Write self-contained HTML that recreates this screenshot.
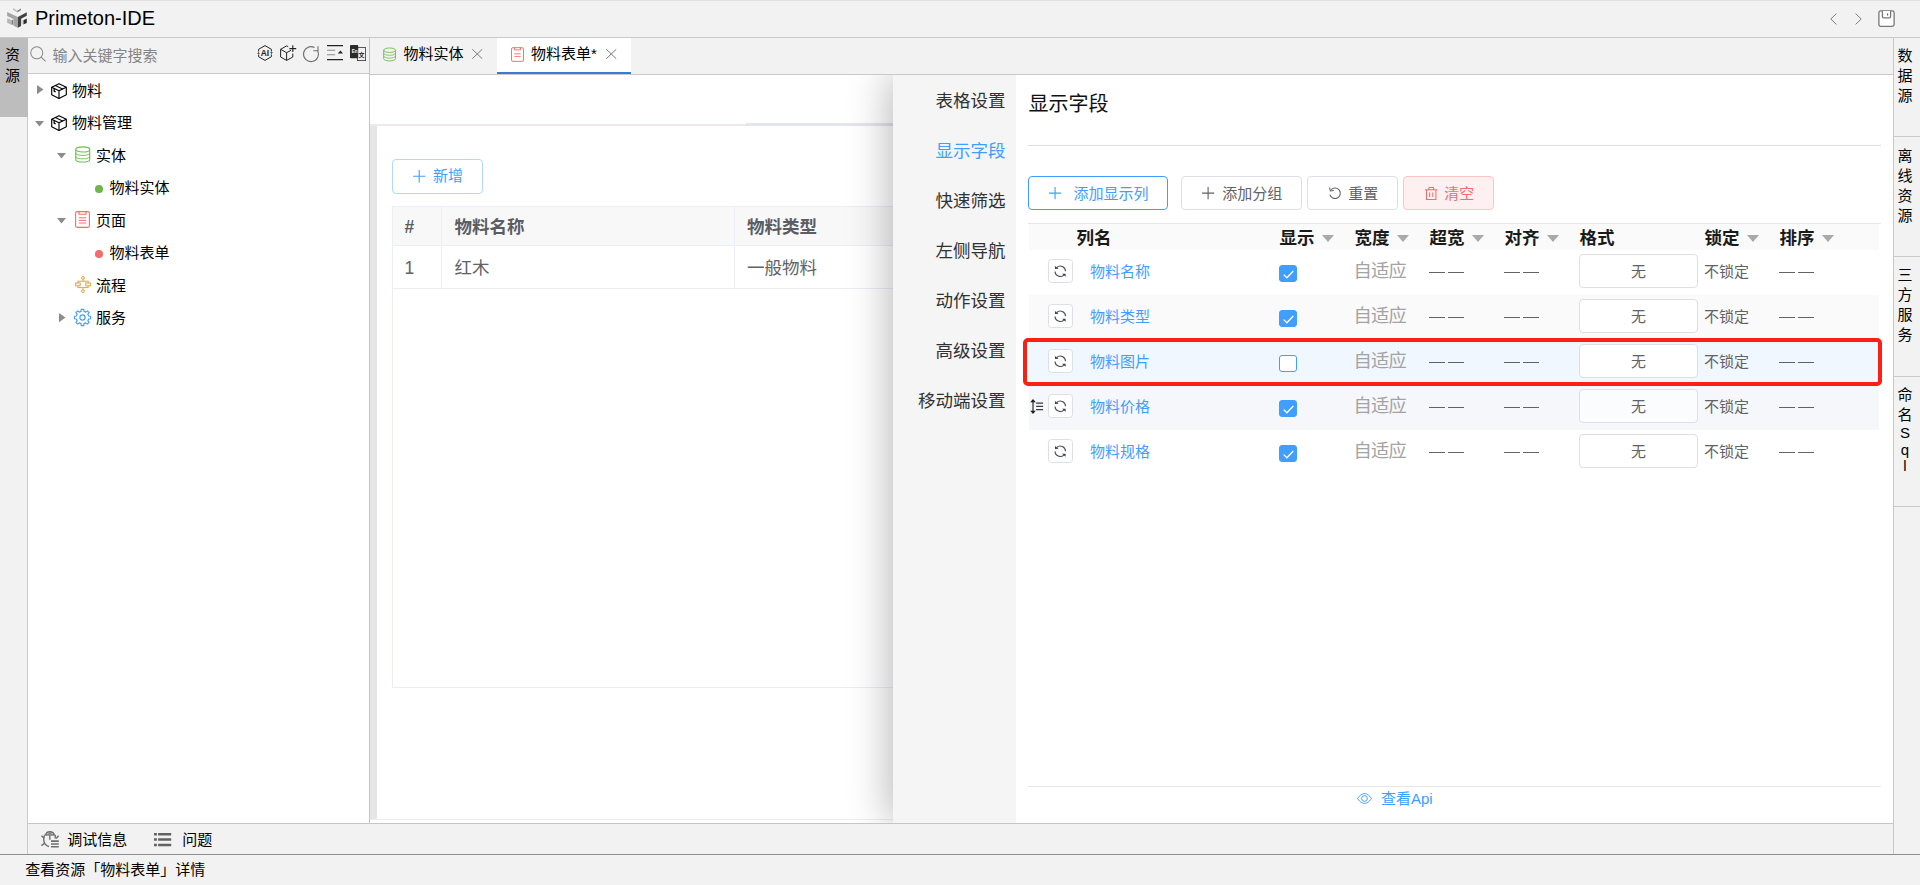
<!DOCTYPE html>
<html lang="zh-CN">
<head>
<meta charset="utf-8">
<title>Primeton-IDE</title>
<style>
*{box-sizing:border-box;margin:0;padding:0}
html,body{width:1920px;height:885px;overflow:hidden;background:#f2f2f2}
body{font-family:"Liberation Sans","Noto Sans CJK SC",sans-serif;font-size:15px;color:#000;position:relative}
.abs{position:absolute}
.t{position:absolute;white-space:nowrap;line-height:20px;height:20px}
svg{position:absolute;overflow:visible}
#titlebar{left:0;top:0;width:1920px;height:38px;background:#f2f2f2;border-bottom:1px solid #c9c9c9;box-shadow:inset 0 1px 0 #e2e2e4}
#lstrip{left:0;top:38px;width:28px;height:816px;background:#f2f2f2;border-right:1px solid #cacaca}
#lstrip .tab{left:0;top:0;width:27.5px;height:78.5px;background:#bdbdbd}
#lpanel{left:28px;top:38px;width:341px;height:785px;background:#fff}
#search{left:0;top:0;width:341px;height:36px;background:#f2f2f2;border-bottom:1px solid #c9c9c9}
#tabbar{left:369px;top:38px;width:1524px;height:37px;background:#f2f2f2;border-left:1px solid #c4c4c4;border-bottom:1px solid #c9c9c9}
#tabbar .on{left:127px;top:0;width:134px;height:36px;background:#fff;border-bottom:2px solid #3a7bd0}
#main{left:369px;top:75px;width:1524px;height:748px;background:#fff;overflow:hidden;border-left:1px solid #c4c4c4}
#drawer{left:523px;top:0;width:1000px;height:748px;background:#fff;box-shadow:-2px 0 40px rgba(0,0,0,.30)}
#dnav{left:0;top:0;width:123px;height:748px;background:#f5f5f5}
#dnav .t{font-size:17.5px;color:#303133;left:42.5px;line-height:24px;height:24px}
#rstrip{left:1893px;top:38px;width:27px;height:816px;background:#f2f2f2;border-left:1px solid #c8c8c8}
#rstrip .t{left:3px;width:16px;text-align:center;font-size:15px}
#rstrip .sep{left:0;width:26px;height:1px;background:#cacaca}
#bbar{left:28px;top:823px;width:1865px;height:31px;background:#f2f2f2;border-top:1px solid #c6c6c6}
#status{left:0;top:854px;width:1920px;height:31px;background:#f2f2f2;border-top:1px solid #8f8f8f}
.tree .t{font-size:15px;color:#000}
.btn{position:absolute;height:34px;border:1px solid #dcdfe6;border-radius:4px;background:#fff}
.hd{font-weight:700;font-size:17.5px;color:#1a1a1a;line-height:24px;height:24px}
.tri{position:absolute;width:0;height:0;border-left:6px solid transparent;border-right:6px solid transparent;border-top:7px solid #a9a9a9}
.row{position:absolute;left:136px;width:850px;height:45px}
.sbtn{position:absolute;left:19px;top:9px;width:25px;height:24px;border:1px solid #dcdfe6;border-radius:3.5px;background:#fff}
.nm{font-size:15px;color:#409eff;left:61px;top:11.5px}
.cb{position:absolute;left:250px;top:15px;width:18px;height:17px;border-radius:3px;background:#409eff;border:1px solid #409eff}
.cb.off{background:#fff;border-color:#409eff}
.ad{font-size:18.3px;letter-spacing:-.8px;color:#a3a3a3;top:10px;line-height:22px;height:22px}
.ds{position:absolute;top:22px;height:1px;background:#606266;width:15.5px}
.inp{position:absolute;left:550px;top:4px;width:119px;height:34px;border:1px solid #dcdfe6;border-radius:4px;background:#fff}
.inp .t{left:0;width:117px;text-align:center;top:6.5px;color:#606266;font-size:15px}
.lk{font-size:15px;color:#606266;left:675px;top:11.5px}
</style>
</head>
<body>
<div id="titlebar" class="abs">
<svg style="left:4px;top:4px" width="28" height="28" viewBox="0 0 885 885"><polygon points="100,250 440,410 440,750 300,685 300,475 100,380" fill="#a4a4a4"/><polygon points="440,410 720,260 720,370 540,465 540,695 440,750" fill="#414141"/><polygon points="285,125 420,210 420,268 285,182" fill="#bcbcbc"/><polygon points="420,210 535,145 535,200 420,268" fill="#7e7e7e"/><polygon points="100,440 250,510 250,660 100,590" fill="#b6b6b6"/><polygon points="250,510 290,490 290,640 250,660" fill="#7a7a7a"/><polygon points="100,440 140,420 290,490 250,510" fill="#e8e8e8"/><polygon points="610,510 720,460 720,600 610,650" fill="#2c2c2c"/><polygon points="550,485 610,510 610,650 550,625" fill="#d2d2d2"/></svg>
<div class="t" style="left:35px;top:5.5px;font-size:20px;line-height:24px;height:24px">Primeton-IDE</div>

<svg style="left:1829.6px;top:12.6px" width="7" height="12" viewBox="0 0 7 12" fill="none" stroke="#7d7d7d" stroke-width="1"><path d="M6.4 0.6L0.8 6L6.4 11.4"/></svg>
<svg style="left:1855.4px;top:12.6px" width="7" height="12" viewBox="0 0 7 12" fill="none" stroke="#7d7d7d" stroke-width="1"><path d="M0.6 0.6L6.2 6L0.6 11.4"/></svg>
<svg style="left:1878px;top:10px" width="17" height="17" viewBox="0 0 17 17" fill="none" stroke="#777" stroke-width="1.3"><rect x="0.9" y="0.9" width="15.2" height="15.4" rx="1.8" fill="#fff"/><path d="M4.4 0.9V6.4Q4.4 7.8 5.8 7.8H11.2Q12.6 7.8 12.6 6.4V0.9" fill="#fff"/><path d="M9.6 3.4V5.6" stroke="#555" stroke-width="1.1"/></svg>

</div>
<div id="lstrip" class="abs"><div class="tab abs"></div>
<div class="t" style="left:5px;top:7.399999999999999px;width:15px">资</div>
<div class="t" style="left:5px;top:27.5px;width:15px">源</div>
</div>
<div id="lpanel" class="abs">
<div id="search" class="abs">
<svg style="left:1.7px;top:7.8px" width="16" height="16" viewBox="0 0 17 17" fill="none" stroke="#8a8a8a" stroke-width="1.1"><circle cx="7.2" cy="7.2" r="6.4"/><path d="M11.8 11.8L16.6 16.4"/></svg>
<div class="t" style="left:24.5px;top:7.5px;color:#848484">输入关键字搜索</div>
<svg style="left:229px;top:7px" width="16" height="16" viewBox="0 0 16 16" fill="none" stroke="#222" stroke-width="1"><path d="M8 0.6L14.4 4.3V11.7L8 15.4L1.6 11.7V4.3Z" stroke-dasharray="none"/><path d="M14.4 6.6V9.6M1.6 6.6V9.6" stroke="#f2f2f2" stroke-width="2"/><path d="M13.2 7.2L14.5 9L15.8 7.2ZM0.2 8.8L1.5 7L2.8 8.8Z" fill="#222" stroke="none"/><text x="8" y="11" font-family="Liberation Sans,sans-serif" font-size="8.4" font-weight="700" text-anchor="middle" fill="#222" stroke="none">AI</text></svg>
<svg style="left:252px;top:7px" width="16" height="16" viewBox="0 0 16 16" fill="none" stroke="#222" stroke-width="1"><path d="M8.2 1.6L6.6 0.9L0.6 4.3V12L6.6 15.4L12.8 12V8.6"/><path d="M0.6 4.3L6.6 7.7L11 5.3M6.6 7.7V15.4"/><path d="M12.8 0.2V7M9.4 3.6H16.2" stroke-width="1.1"/></svg>
<svg style="left:274.8px;top:8px" width="16" height="16" viewBox="0 0 16 16" fill="none" stroke="#707070" stroke-width="1.1"><path d="M14.7 4.74A7.5 7.5 0 1 1 11.5 1.5"/><path d="M15 0.3V4.7H10.3"/></svg>
<svg style="left:299px;top:7px" width="16" height="16" viewBox="0 0 16 16" fill="none"><path d="M0 0.6H16M0 14.6H16" stroke="#222" stroke-width="1.1"/><path d="M0 5.2H8.2M0 9.8H8.2" stroke="#8a8a8a" stroke-width="1.1"/><path d="M10.8 8.6L13.4 5.6L16 8.6Z" fill="#222"/></svg>
<svg style="left:322px;top:7.3px" width="16" height="16" viewBox="0 0 16 16"><rect x="7.4" y="2.6" width="8.2" height="13" fill="#f2f2f2" stroke="#333" stroke-width=".8"/><rect x="0" y="0" width="8.2" height="13.2" rx=".8" fill="#2b2b2b"/><text x="4.6" y="8.2" font-family="Liberation Sans,sans-serif" font-size="4.6" font-weight="700" text-anchor="middle" fill="#fff">En</text><text x="11.4" y="11.6" font-family="Noto Sans CJK SC,sans-serif" font-size="6" font-weight="700" text-anchor="middle" fill="#222">文</text></svg>
</div>
<div class="tree"><svg style="left:8.8px;top:47.1px" width="6.5" height="9.2" viewBox="0 0 6.5 9.2"><path d="M0 0L6.5 4.6L0 9.2Z" fill="#8c8c8c"/></svg><svg style="left:23px;top:45px" width="16" height="16" viewBox="0 0 16 16" fill="none" stroke="#000" stroke-width="1.15" stroke-linejoin="round"><path d="M8 0.7L15.3 4.2V11.8L8 15.4L0.7 11.8V4.2Z"/><path d="M0.7 4.2L8 7.8L15.3 4.2M8 7.8V15.4"/><path d="M4.3 2.5L11.6 6"/><path d="M3.2 5.6V8.2L4.6 8.9" stroke-width="1.3"/></svg><div class="t" style="left:44px;top:42.75px;">物料</div><svg style="left:7.0px;top:82.89999999999999px" width="9" height="5.4" viewBox="0 0 9 5.4"><path d="M0 0L9 0L4.5 5.4Z" fill="#8c8c8c"/></svg><svg style="left:23px;top:77px" width="16" height="16" viewBox="0 0 16 16" fill="none" stroke="#000" stroke-width="1.15" stroke-linejoin="round"><path d="M8 0.7L15.3 4.2V11.8L8 15.4L0.7 11.8V4.2Z"/><path d="M0.7 4.2L8 7.8L15.3 4.2M8 7.8V15.4"/><path d="M4.3 2.5L11.6 6"/><path d="M3.2 5.6V8.2L4.6 8.9" stroke-width="1.3"/></svg><div class="t" style="left:44px;top:75.25px;">物料管理</div><svg style="left:29.0px;top:114.8px" width="9" height="5.4" viewBox="0 0 9 5.4"><path d="M0 0L9 0L4.5 5.4Z" fill="#8c8c8c"/></svg><svg style="left:46.8px;top:108px" width="15.5" height="17" viewBox="0 0 16 17" fill="none" stroke="#6cbf4b" stroke-width="1.1"><ellipse cx="8" cy="3.3" rx="7.2" ry="2.7"/><path d="M0.8 3.3V13.6C0.8 15.1 4 16.3 8 16.3S15.2 15.1 15.2 13.6V3.3"/><path d="M0.8 6.8C0.8 8.3 4 9.5 8 9.5S15.2 8.3 15.2 6.8" stroke-opacity=".85"/><path d="M0.8 10.2C0.8 11.7 4 12.9 8 12.9S15.2 11.7 15.2 10.2" stroke-opacity=".85"/></svg><div class="t" style="left:68px;top:107.75px;">实体</div><div class="abs" style="left:67px;top:147px;width:7.6px;height:7.6px;border-radius:50%;background:#6cb64a"></div><div class="t" style="left:81.5px;top:140.25px;">物料实体</div><svg style="left:29.0px;top:179.70000000000002px" width="9" height="5.4" viewBox="0 0 9 5.4"><path d="M0 0L9 0L4.5 5.4Z" fill="#8c8c8c"/></svg><svg style="left:47.2px;top:173px" width="15" height="17" viewBox="0 0 15 17" fill="none" stroke="#f56c6c" stroke-width="1.1"><rect x="0.6" y="0.6" width="13.8" height="15.8" rx="1.6"/><path d="M4 0.6V3.2H11V0.6"/><path d="M3.8 6.8H11.2M3.8 9.4H11.2M3.8 12H11.2" stroke-width="1"/></svg><div class="t" style="left:68px;top:172.75px;">页面</div><div class="abs" style="left:67px;top:212px;width:7.6px;height:7.6px;border-radius:50%;background:#f56c6c"></div><div class="t" style="left:81.5px;top:205.25px;">物料表单</div><svg style="left:46.8px;top:238px" width="16" height="17" viewBox="0 0 16 17" fill="none" stroke="#e6a23c" stroke-width="1"><circle cx="8" cy="1.9" r="1.4"/><circle cx="8" cy="15.1" r="1.4"/><path d="M8 3.3V5.2M8 11.6V13.7"/><path d="M2.8 5.2H13.2M2.8 11.6H13.2M2.8 5.2V7M13.2 5.2V7M2.8 9.8V11.6M13.2 9.8V11.6"/><rect x="0.6" y="7" width="4.6" height="2.8"/><rect x="10.8" y="7" width="4.6" height="2.8"/></svg><div class="t" style="left:68px;top:237.75px;">流程</div><svg style="left:31.000000000000004px;top:274.9px" width="6.5" height="9.2" viewBox="0 0 6.5 9.2"><path d="M0 0L6.5 4.6L0 9.2Z" fill="#8c8c8c"/></svg><svg style="left:46px;top:271px" width="17" height="17" viewBox="0 0 17 17" fill="none" stroke="#409eff" stroke-width="1.15" stroke-linejoin="round"><path d="M7.22 0.40L9.78 0.40L9.97 2.37L11.79 3.13L13.32 1.87L15.13 3.68L13.87 5.21L14.63 7.03L16.60 7.22L16.60 9.78L14.63 9.97L13.87 11.79L15.13 13.32L13.32 15.13L11.79 13.87L9.97 14.63L9.78 16.60L7.22 16.60L7.03 14.63L5.21 13.87L3.68 15.13L1.87 13.32L3.13 11.79L2.37 9.97L0.40 9.78L0.40 7.22L2.37 7.03L3.13 5.21L1.87 3.68L3.68 1.87L5.21 3.13L7.03 2.37Z"/><circle cx="8.5" cy="8.5" r="2.6"/></svg><div class="t" style="left:68px;top:270.25px;">服务</div></div>
</div>
<div id="tabbar" class="abs"><div class="on abs"></div>
<svg style="left:13px;top:9px" width="13.2" height="15" viewBox="0 0 16 17" fill="none" stroke="#6cbf4b" stroke-width="1.1"><ellipse cx="8" cy="3.3" rx="7.2" ry="2.7"/><path d="M0.8 3.3V13.6C0.8 15.1 4 16.3 8 16.3S15.2 15.1 15.2 13.6V3.3"/><path d="M0.8 6.8C0.8 8.3 4 9.5 8 9.5S15.2 8.3 15.2 6.8" stroke-opacity=".85"/><path d="M0.8 10.2C0.8 11.7 4 12.9 8 12.9S15.2 11.7 15.2 10.2" stroke-opacity=".85"/></svg>
<div class="t" style="left:33.5px;top:6.399999999999999px">物料实体</div>
<svg style="left:102.19999999999999px;top:11.299999999999997px" width="10.5" height="10" viewBox="0 0 10.5 10" fill="none" stroke="#7b7b7b" stroke-width="1"><path d="M0.3 0.3L10.2 9.7M10.2 0.3L0.3 9.7"/></svg>
<svg style="left:141px;top:9px" width="13" height="15" viewBox="0 0 15 17" fill="none" stroke="#f56c6c" stroke-width="1.1"><rect x="0.6" y="0.6" width="13.8" height="15.8" rx="1.6"/><path d="M4 0.6V3.2H11V0.6"/><path d="M3.8 7.7H11.2M3.8 10.9H11.2" stroke-width="1"/></svg>
<div class="t" style="left:161px;top:6.399999999999999px">物料表单*</div>
<svg style="left:236px;top:11.299999999999997px" width="10.5" height="10" viewBox="0 0 10.5 10" fill="none" stroke="#7b7b7b" stroke-width="1"><path d="M0.3 0.3L10.2 9.7M10.2 0.3L0.3 9.7"/></svg>
</div>
<div id="main" class="abs">
<div class="abs" style="left:0;top:48.599999999999994px;width:376px;height:2px;background:#efe9e9"></div>
<div class="abs" style="left:376px;top:48px;width:160px;height:3px;background:#e3e6ec"></div>
<div class="abs" style="left:0;top:50.599999999999994px;width:7px;height:694px;background:#e6e6e6"></div>
<div class="abs" style="left:0;top:744.2px;width:540px;height:1px;background:#ededed"></div>
<div class="btn" style="left:22px;top:84px;width:91px;height:35px;border-color:#b3d8ff"></div>
<svg style="left:43.19999999999999px;top:95px" width="12.4" height="12.4" viewBox="0 0 12.4 12.4" stroke="#409eff" stroke-width="1.1"><path d="M6.2 0V12.4M0 6.2H12.4"/></svg>
<div class="t" style="left:63px;top:91.19999999999999px;color:#409eff">新增</div>
<div class="abs" style="left:22px;top:131px;width:520px;height:482px;border:1px solid #ebeef5;border-right:0"></div>
<div class="abs" style="left:23px;top:132px;width:520px;height:38px;background:#f8f8f9"></div>
<div class="abs" style="left:23px;top:170px;width:520px;height:1px;background:#ebeef5"></div>
<div class="abs" style="left:23px;top:213px;width:520px;height:1px;background:#ebeef5"></div>
<div class="abs" style="left:71px;top:132px;width:1px;height:82px;background:#ebeef5"></div>
<div class="abs" style="left:364px;top:132px;width:1px;height:82px;background:#ebeef5"></div>
<div class="t hd" style="left:34.5px;top:139.5px;color:#5a5d63">#</div>
<div class="t hd" style="left:84.5px;top:139.5px;color:#5a5d63">物料名称</div>
<div class="t hd" style="left:377px;top:139.5px;color:#5a5d63">物料类型</div>
<div class="t" style="left:34.5px;top:181px;font-size:17.5px;line-height:24px;height:24px;color:#606266">1</div>
<div class="t" style="left:84.5px;top:181px;font-size:17.5px;line-height:24px;height:24px;color:#606266">红木</div>
<div class="t" style="left:377px;top:181px;font-size:17.5px;line-height:24px;height:24px;color:#606266">一般物料</div>
<div id="drawer" class="abs"><div id="dnav" class="abs"><div class="t" style="left:42.60000000000002px;top:13.599999999999994px;color:#303133">表格设置</div><div class="t" style="left:42.60000000000002px;top:63.599999999999994px;color:#409eff">显示字段</div><div class="t" style="left:42.60000000000002px;top:113.6px;color:#303133">快速筛选</div><div class="t" style="left:42.60000000000002px;top:163.6px;color:#303133">左侧导航</div><div class="t" style="left:42.60000000000002px;top:213.60000000000002px;color:#303133">动作设置</div><div class="t" style="left:42.60000000000002px;top:263.6px;color:#303133">高级设置</div><div class="t" style="left:25.100000000000023px;top:313.6px;color:#303133">移动端设置</div></div>
<div class="t" style="left:135.4000000000001px;top:14.599999999999994px;font-size:20px;line-height:28px;height:28px;color:#111">显示字段</div>
<div class="abs" style="left:135px;top:70px;width:853px;height:1px;background:#dcdfe6"></div>
<div class="btn" style="left:135px;top:101px;width:140px;border-color:#409eff"></div>
<svg style="left:156.29999999999995px;top:112.19999999999999px" width="12.2" height="12.2" viewBox="0 0 12.2 12.2" stroke="#409eff" stroke-width="1.1"><path d="M6.1 0V12.2M0 6.1H12.2"/></svg>
<div class="t" style="left:180.5999999999999px;top:109.4px;color:#409eff">添加显示列</div>
<div class="btn" style="left:288px;top:101px;width:121px"></div>
<svg style="left:309.20000000000005px;top:112.19999999999999px" width="12.2" height="12.2" viewBox="0 0 12.2 12.2" stroke="#606266" stroke-width="1.1"><path d="M6.1 0V12.2M0 6.1H12.2"/></svg>
<div class="t" style="left:329.20000000000005px;top:109.4px;color:#606266">添加分组</div>
<div class="btn" style="left:414px;top:101px;width:91px"></div>
<svg style="left:435.5999999999999px;top:112.19999999999999px" width="12" height="12" viewBox="0 0 12 12" fill="none" stroke="#606266" stroke-width="1.05"><path d="M2.2 2.6A5.3 5.3 0 1 1 0.9 7.6"/><path d="M0.6 0.6L1.4 4L4.8 3.4"/></svg>
<div class="t" style="left:455.29999999999995px;top:109.4px;color:#606266">重置</div>
<div class="btn" style="left:510px;top:101px;width:91px;background:#fef0f0;border-color:#fbc4c4"></div>
<svg style="left:531.5px;top:111.80000000000001px" width="12.4" height="13.2" viewBox="0 0 12.4 13.2" fill="none" stroke="#f56c6c" stroke-width="1.05"><path d="M0 2.8H12.4M3.8 2.8V1.2Q3.8 0.5 4.5 0.5H7.9Q8.6 0.5 8.6 1.2V2.8M1.5 2.8V12.6H10.9V2.8M4.6 5.4V10M7.8 5.4V10"/></svg>
<div class="t" style="left:551.2px;top:109.4px;color:#f56c6c">清空</div>
<div class="abs" style="left:135px;top:148px;width:853px;height:1px;background:#e6e6e6"></div>
<div class="abs" style="left:136px;top:149px;width:850px;height:26px;background:#fafafa"></div>
<div class="t hd" style="left:183.5999999999999px;top:150.6px">列名</div><div class="t hd" style="left:386.4000000000001px;top:150.6px">显示</div><div class="tri" style="left:429.20000000000005px;top:160px"></div><div class="t hd" style="left:461.4000000000001px;top:150.6px">宽度</div><div class="tri" style="left:504px;top:160px"></div><div class="t hd" style="left:536.4000000000001px;top:150.6px">超宽</div><div class="tri" style="left:579px;top:160px"></div><div class="t hd" style="left:611.4000000000001px;top:150.6px">对齐</div><div class="tri" style="left:654px;top:160px"></div><div class="t hd" style="left:686.4000000000001px;top:150.6px">格式</div><div class="t hd" style="left:811.4000000000001px;top:150.6px">锁定</div><div class="tri" style="left:854px;top:160px"></div><div class="t hd" style="left:886.4000000000001px;top:150.6px">排序</div><div class="tri" style="left:929px;top:160px"></div>
<div class="row" style="top:175px;background:#fff">
<div class="sbtn"><svg style="left:5.3px;top:4.9px" width="12.6" height="12.6" viewBox="0 0 12 12" fill="none" stroke="#4d5056" stroke-width="1.05"><path d="M2.6 2.4A5 5 0 0 1 11 5.9"/><path d="M9.4 9.6A5 5 0 0 1 1 6.1"/><path d="M0.84 0.84L4.4 3.6L1 3.74Z" fill="#3c3f45" stroke="none"/><path d="M11.16 11.16L7.6 8.4L11 8.26Z" fill="#3c3f45" stroke="none"/></svg></div>
<div class="t nm">物料名称</div>
<div class="cb"><svg style="left:2.5px;top:3.5px" width="11" height="9" viewBox="0 0 11 9" fill="none" stroke="#fff" stroke-width="1.3"><path d="M0.7 4.6L3.9 7.8L10.3 1"/></svg></div>
<div class="t ad" style="left:324.6px">自适应</div>
<div class="ds" style="left:400.2px"></div><div class="ds" style="left:419.4px"></div><div class="ds" style="left:475.2px"></div><div class="ds" style="left:494.4px"></div>
<div class="inp" style=""><div class="t">无</div></div>
<div class="t lk">不锁定</div>
<div class="ds" style="left:750.2px"></div><div class="ds" style="left:769.4000000000001px"></div>
</div><div class="row" style="top:220px;background:#fafafa">
<div class="sbtn"><svg style="left:5.3px;top:4.9px" width="12.6" height="12.6" viewBox="0 0 12 12" fill="none" stroke="#4d5056" stroke-width="1.05"><path d="M2.6 2.4A5 5 0 0 1 11 5.9"/><path d="M9.4 9.6A5 5 0 0 1 1 6.1"/><path d="M0.84 0.84L4.4 3.6L1 3.74Z" fill="#3c3f45" stroke="none"/><path d="M11.16 11.16L7.6 8.4L11 8.26Z" fill="#3c3f45" stroke="none"/></svg></div>
<div class="t nm">物料类型</div>
<div class="cb"><svg style="left:2.5px;top:3.5px" width="11" height="9" viewBox="0 0 11 9" fill="none" stroke="#fff" stroke-width="1.3"><path d="M0.7 4.6L3.9 7.8L10.3 1"/></svg></div>
<div class="t ad" style="left:324.6px">自适应</div>
<div class="ds" style="left:400.2px"></div><div class="ds" style="left:419.4px"></div><div class="ds" style="left:475.2px"></div><div class="ds" style="left:494.4px"></div>
<div class="inp" style=""><div class="t">无</div></div>
<div class="t lk">不锁定</div>
<div class="ds" style="left:750.2px"></div><div class="ds" style="left:769.4000000000001px"></div>
</div><div class="row" style="top:265px;background:#f0f7ff">
<div class="sbtn"><svg style="left:5.3px;top:4.9px" width="12.6" height="12.6" viewBox="0 0 12 12" fill="none" stroke="#4d5056" stroke-width="1.05"><path d="M2.6 2.4A5 5 0 0 1 11 5.9"/><path d="M9.4 9.6A5 5 0 0 1 1 6.1"/><path d="M0.84 0.84L4.4 3.6L1 3.74Z" fill="#3c3f45" stroke="none"/><path d="M11.16 11.16L7.6 8.4L11 8.26Z" fill="#3c3f45" stroke="none"/></svg></div>
<div class="t nm">物料图片</div>
<div class="cb off"></div>
<div class="t ad" style="left:324.6px">自适应</div>
<div class="ds" style="left:400.2px"></div><div class="ds" style="left:419.4px"></div><div class="ds" style="left:475.2px"></div><div class="ds" style="left:494.4px"></div>
<div class="inp" style=""><div class="t">无</div></div>
<div class="t lk">不锁定</div>
<div class="ds" style="left:750.2px"></div><div class="ds" style="left:769.4000000000001px"></div>
</div><div class="row" style="top:310px;background:#f5f7fa">
<div class="sbtn"><svg style="left:5.3px;top:4.9px" width="12.6" height="12.6" viewBox="0 0 12 12" fill="none" stroke="#4d5056" stroke-width="1.05"><path d="M2.6 2.4A5 5 0 0 1 11 5.9"/><path d="M9.4 9.6A5 5 0 0 1 1 6.1"/><path d="M0.84 0.84L4.4 3.6L1 3.74Z" fill="#3c3f45" stroke="none"/><path d="M11.16 11.16L7.6 8.4L11 8.26Z" fill="#3c3f45" stroke="none"/></svg></div>
<div class="t nm">物料价格</div>
<div class="cb"><svg style="left:2.5px;top:3.5px" width="11" height="9" viewBox="0 0 11 9" fill="none" stroke="#fff" stroke-width="1.3"><path d="M0.7 4.6L3.9 7.8L10.3 1"/></svg></div>
<div class="t ad" style="left:324.6px">自适应</div>
<div class="ds" style="left:400.2px"></div><div class="ds" style="left:419.4px"></div><div class="ds" style="left:475.2px"></div><div class="ds" style="left:494.4px"></div>
<div class="inp" style="background:#fbfcfe"><div class="t">无</div></div>
<div class="t lk">不锁定</div>
<div class="ds" style="left:750.2px"></div><div class="ds" style="left:769.4000000000001px"></div>
</div><div class="row" style="top:355px;background:#fff">
<div class="sbtn"><svg style="left:5.3px;top:4.9px" width="12.6" height="12.6" viewBox="0 0 12 12" fill="none" stroke="#4d5056" stroke-width="1.05"><path d="M2.6 2.4A5 5 0 0 1 11 5.9"/><path d="M9.4 9.6A5 5 0 0 1 1 6.1"/><path d="M0.84 0.84L4.4 3.6L1 3.74Z" fill="#3c3f45" stroke="none"/><path d="M11.16 11.16L7.6 8.4L11 8.26Z" fill="#3c3f45" stroke="none"/></svg></div>
<div class="t nm">物料规格</div>
<div class="cb"><svg style="left:2.5px;top:3.5px" width="11" height="9" viewBox="0 0 11 9" fill="none" stroke="#fff" stroke-width="1.3"><path d="M0.7 4.6L3.9 7.8L10.3 1"/></svg></div>
<div class="t ad" style="left:324.6px">自适应</div>
<div class="ds" style="left:400.2px"></div><div class="ds" style="left:419.4px"></div><div class="ds" style="left:475.2px"></div><div class="ds" style="left:494.4px"></div>
<div class="inp" style=""><div class="t">无</div></div>
<div class="t lk">不锁定</div>
<div class="ds" style="left:750.2px"></div><div class="ds" style="left:769.4000000000001px"></div>
</div>
<div class="abs" style="left:130px;top:263px;width:859px;height:48px;border:4px solid #fb2013;border-radius:5px"></div>
<svg style="left:136.9000000000001px;top:324px" width="14" height="15" viewBox="0 0 14 15" fill="none"><path d="M3 2V13" stroke="#555" stroke-width="1.5"/><path d="M0.2 3.2L3 0L5.8 3.2ZM0.2 11.8L3 15L5.8 11.8Z" fill="#222"/><path d="M6.1 4.2H13.1M6.1 7.4H13.1M6.1 10.6H13.1" stroke="#3a3a3a" stroke-width="1.25"/></svg>
<div class="abs" style="left:135px;top:711px;width:853px;height:1px;background:#e6e6e6"></div>
<svg style="left:463.5999999999999px;top:718px" width="15" height="11" viewBox="0 0 15 11" fill="none" stroke="#409eff" stroke-width="1"><path d="M0.6 5.5C3 1.8 5.4 0.6 7.5 0.6S12 1.8 14.4 5.5C12 9.2 9.6 10.4 7.5 10.4S3 9.2 0.6 5.5Z"/><circle cx="7.5" cy="5.5" r="2.9"/></svg>
<div class="t" style="left:488px;top:714.4px;color:#409eff">查看Api</div>
</div></div>
<div id="rstrip" class="abs"><div class="t" style="top:8.399999999999999px">数</div><div class="t" style="top:28.400000000000006px">据</div><div class="t" style="top:48.400000000000006px">源</div><div class="t" style="top:107.5px">离</div><div class="t" style="top:127.5px">线</div><div class="t" style="top:147.5px">资</div><div class="t" style="top:167.5px">源</div><div class="t" style="top:226.5px">三</div><div class="t" style="top:246.5px">方</div><div class="t" style="top:266.5px">服</div><div class="t" style="top:286.5px">务</div><div class="t" style="top:347.3px">命</div><div class="t" style="top:367.3px">名</div><div class="t" style="top:384.8px">S</div><div class="t" style="top:401.6px">q</div><div class="t" style="top:418.4px">l</div><div class="sep abs" style="top:98px"></div><div class="sep abs" style="top:218px"></div><div class="sep abs" style="top:338px"></div><div class="sep abs" style="top:468px"></div></div>
<div id="bbar" class="abs">
<svg style="left:8px;top:2px" width="30" height="26" viewBox="0 0 1021 885" fill="none" stroke="#6b6b6b" stroke-width="46" stroke-linecap="butt"><path d="M335 300Q345 200 470 195Q600 200 615 300"/><path d="M400 275Q470 225 545 275" stroke-width="30"/><path d="M290 305H655"/><path d="M290 310Q235 480 300 600Q350 680 445 705"/><path d="M470 320V465"/><path d="M655 310V425"/><path d="M770 330L685 425"/><path d="M185 335L275 415"/><path d="M185 668L290 585"/><path d="M510 515H775M510 612H775M510 710H775" stroke="#6e6e6e" stroke-width="52"/></svg>
<div class="t" style="left:39.2px;top:5.600000000000023px">调试信息</div>
<svg style="left:125.6px;top:8.5px" width="17.2" height="13.4" viewBox="0 0 17.2 13.4" stroke="#636363" stroke-width="2.5"><path d="M0 1.3H2.9M4.1 1.3H17.2M0 6.6H2.9M4.1 6.6H17.2M0 11.9H2.9M4.1 11.9H17.2"/></svg>
<div class="t" style="left:154.2px;top:5.600000000000023px">问题</div>
</div>
<div id="status" class="abs">
<div class="t" style="left:25.2px;top:4.7999999999999545px">查看资源「物料表单」详情</div>
</div>
</body>
</html>
